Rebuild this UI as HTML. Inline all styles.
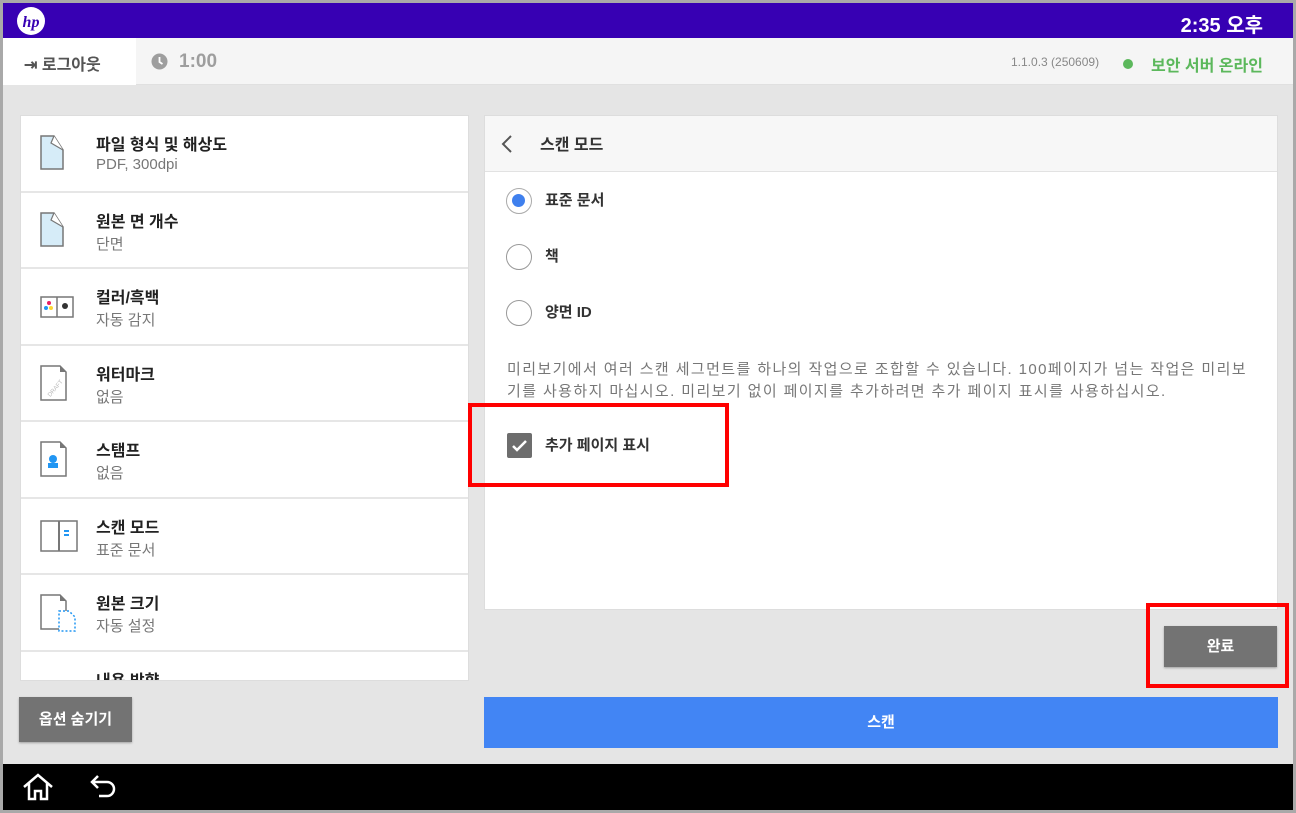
<!DOCTYPE html>
<html><head><meta charset="utf-8"><style>
*{margin:0;padding:0;box-sizing:border-box}
body{width:1296px;height:813px;background:#a9a9a9;position:relative;overflow:hidden;font-family:"Liberation Sans","Noto Sans CJK KR",sans-serif}
.abs{position:absolute}
#scr{left:3px;top:3px;width:1290px;height:807px;background:#e5e5e5;overflow:hidden}
.top{left:0;top:0;width:1290px;height:35px;background:#3700b3}
.bar2{left:0;top:35px;width:1290px;height:47px;background:#f5f5f5;border-bottom:1px solid #e0e0e0}
.left{left:17px;top:112px;width:449px;height:566px;background:#fff;overflow:hidden;border:1px solid #ddd}
.row{position:relative;height:76.5px;border-bottom:2px solid #e6e6e6}
.row .t{position:absolute;left:75px;top:15px;font-size:16px;font-weight:bold;color:#222}
.row .s{position:absolute;left:75px;top:40px;font-size:15px;color:#777}
.row svg{position:absolute;left:18px;top:18px}
.right{left:481px;top:112px;width:794px;height:495px;background:#fff;border:1px solid #ddd}
.hdr{height:56px;background:#f7f7f7;border-bottom:1px solid #e2e2e2;position:relative}
.radio{position:absolute;left:21px;width:26px;height:26px;border:1.5px solid #999;border-radius:50%;background:#fff}
.rl{position:absolute;left:60px;font-size:15px;font-weight:bold;color:#333}
.redbox{border:4px solid #f00}
</style></head><body>
<div id="scr" class="abs">
 <div class="abs top">
  <svg class="abs" style="left:13px;top:3px" width="30" height="30" viewBox="0 0 30 30"><circle cx="15" cy="15" r="14" fill="#fff"/><text x="15" y="21" text-anchor="middle" font-family="Liberation Serif" font-style="italic" font-weight="bold" font-size="16" fill="#3700b3">hp</text></svg>
  <div class="abs" style="right:30px;top:6px;color:#fff;font-size:20px;font-weight:bold">2:35 오후</div>
 </div>
 <div class="abs bar2">
  <div class="abs" style="left:0;top:0;width:133px;height:47px;background:#fff"></div>
  <div class="abs" style="left:21px;top:13px;font-size:16px;font-weight:bold;color:#555">⇥ 로그아웃</div>
  <svg class="abs" style="left:148px;top:15px" width="17" height="17" viewBox="0 0 17 17"><circle cx="8.5" cy="8.5" r="8" fill="#9e9e9e"/><path d="M8.5 4v5l3 2" stroke="#fff" stroke-width="1.8" fill="none"/></svg>
  <div class="abs" style="left:176px;top:13px;font-size:19px;font-weight:bold;color:#9e9e9e">1:00</div>
  <div class="abs" style="left:1008px;top:17px;font-size:12px;color:#888">1.1.0.3 (250609)</div>
  <div class="abs" style="left:1120px;top:21px;width:10px;height:10px;border-radius:50%;background:#5cb85c"></div>
  <div class="abs" style="left:1148px;top:14px;font-size:16px;font-weight:bold;color:#5cb85c">보안 서버 온라인</div>
 </div>

 <div class="abs left">
  <div class="row"><svg width="30" height="38"><path d="M2 2h13l9 14v19H2z" fill="#d6ecf8" stroke="#777" stroke-width="1.5"/><path d="M15 2l-3 7 12 7" fill="#fff" stroke="#777" stroke-width="1.2"/></svg><div class="t">파일 형식 및 해상도</div><div class="s">PDF, 300dpi</div></div>
  <div class="row"><svg width="30" height="38"><path d="M2 2h13l9 14v19H2z" fill="#d6ecf8" stroke="#777" stroke-width="1.5"/><path d="M15 2l-3 7 12 7" fill="#fff" stroke="#777" stroke-width="1.2"/></svg><div class="t">원본 면 개수</div><div class="s">단면</div></div>
  <div class="row"><svg width="36" height="38"><rect x="2" y="10" width="32" height="20" fill="#fff" stroke="#777" stroke-width="1.5"/><line x1="18" y1="10" x2="18" y2="30" stroke="#777" stroke-width="1.5"/><circle cx="10" cy="16" r="2" fill="#e91e63"/><circle cx="7" cy="21" r="2" fill="#2196f3"/><circle cx="12" cy="21" r="2" fill="#fdd835"/><circle cx="26" cy="19" r="3" fill="#333"/></svg><div class="t">컬러/흑백</div><div class="s">자동 감지</div></div>
  <div class="row"><svg width="30" height="38"><path d="M2 2h19l6 6v28H2z" fill="#fff" stroke="#777" stroke-width="1.5"/><path d="M21 2v6h6z" fill="#777"/><text x="6" y="30" font-size="6" fill="#bbb" transform="rotate(-50 12 26)">DRAFT</text></svg><div class="t">워터마크</div><div class="s">없음</div></div>
  <div class="row"><svg width="30" height="38"><path d="M2 2h19l6 6v28H2z" fill="#fff" stroke="#777" stroke-width="1.5"/><path d="M21 2v6h6z" fill="#777"/><circle cx="14" cy="19" r="4" fill="#2196f3"/><rect x="9" y="23" width="10" height="5" fill="#2196f3"/></svg><div class="t">스탬프</div><div class="s">없음</div></div>
  <div class="row"><svg width="40" height="38"><rect x="2" y="4" width="36" height="30" fill="#fff" stroke="#777" stroke-width="1.5"/><line x1="20" y1="4" x2="20" y2="34" stroke="#777" stroke-width="2"/><rect x="25" y="13" width="5" height="2" fill="#2196f3"/><rect x="25" y="17" width="5" height="2" fill="#2196f3"/></svg><div class="t">스캔 모드</div><div class="s">표준 문서</div></div>
  <div class="row"><svg width="40" height="40"><path d="M2 2h19l6 6v28H2z" fill="#fff" stroke="#777" stroke-width="1.5"/><path d="M21 2v6h6z" fill="#777"/><path d="M20 18h10l6 6v14H20z" fill="#fff" stroke="#2196f3" stroke-width="1.5" stroke-dasharray="2 2"/></svg><div class="t">원본 크기</div><div class="s">자동 설정</div></div>
  <div class="row"><svg width="40" height="38"><rect x="2" y="22" width="24" height="20" fill="#fff" stroke="#777" stroke-width="1.5"/><path d="M24 18c4 0 6 3 6 6" stroke="#2196f3" stroke-width="2" fill="none"/></svg><div class="t">내용 방향</div><div class="s"></div></div>
 </div>

 <div class="abs right">
  <div class="hdr">
   <svg class="abs" style="left:16px;top:19px" width="12" height="18"><path d="M10 1L2 9l8 8" stroke="#555" stroke-width="2" fill="none"/></svg>
   <div class="abs" style="left:55px;top:15px;font-size:16px;font-weight:bold;color:#333">스캔 모드</div>
  </div>
  <div class="radio" style="top:72px;border-color:#aaa"><div style="position:absolute;left:5px;top:5px;width:13px;height:13px;border-radius:50%;background:#3f80ee"></div></div>
  <div class="rl" style="top:73px">표준 문서</div>
  <div class="radio" style="top:128px"></div><div class="rl" style="top:129px">책</div>
  <div class="radio" style="top:184px"></div><div class="rl" style="top:185px">양면 ID</div>
  <div class="abs" style="left:22px;top:243px;width:752px;font-size:15px;letter-spacing:1.4px;word-break:break-all;line-height:22px;color:#777">미리보기에서 여러 스캔 세그먼트를 하나의 작업으로 조합할 수 있습니다. 100페이지가 넘는 작업은 미리보기를 사용하지 마십시오. 미리보기 없이 페이지를 추가하려면 추가 페이지 표시를 사용하십시오.</div>
  <div class="abs" style="left:22px;top:317px;width:25px;height:25px;background:#6d6d6d;border-radius:2px"><svg width="25" height="25"><path d="M6 13l4 4 9-9" stroke="#fff" stroke-width="2.5" fill="none"/></svg></div>
  <div class="rl" style="top:318px">추가 페이지 표시</div>
 </div>
 <div class="abs redbox" style="left:465px;top:400px;width:261px;height:84px"></div>

 <div class="abs" style="left:1161px;top:623px;width:113px;height:41px;background:#737373;color:#fff;font-size:15px;font-weight:bold;text-align:center;line-height:41px;box-shadow:0 1px 2px rgba(0,0,0,.3)">완료</div>
 <div class="abs redbox" style="left:1143px;top:600px;width:143px;height:85px"></div>

 <div class="abs" style="left:16px;top:694px;width:113px;height:45px;background:#737373;color:#fff;font-size:15px;font-weight:bold;text-align:center;line-height:45px;box-shadow:0 1px 2px rgba(0,0,0,.3)">옵션 숨기기</div>
 <div class="abs" style="left:481px;top:694px;width:794px;height:51px;background:#4285f4;color:#fff;font-size:15px;font-weight:bold;text-align:center;line-height:51px">스캔</div>

 <div class="abs" style="left:0;top:761px;width:1290px;height:46px;background:#000">
  <svg class="abs" style="left:18px;top:8px" width="34" height="30" viewBox="0 0 34 30"><path d="M3 15L17 3l14 12M8 11v16h6v-8h6v8h6V11" stroke="#fff" stroke-width="2.5" fill="none"/></svg>
  <svg class="abs" style="left:86px;top:9px" width="30" height="28" viewBox="0 0 30 28"><path d="M9 3L3 9l6 6M3 9h15a7 7 0 0 1 0 14H10" stroke="#fff" stroke-width="2.5" fill="none"/></svg>
 </div>
</div>
</body></html>
